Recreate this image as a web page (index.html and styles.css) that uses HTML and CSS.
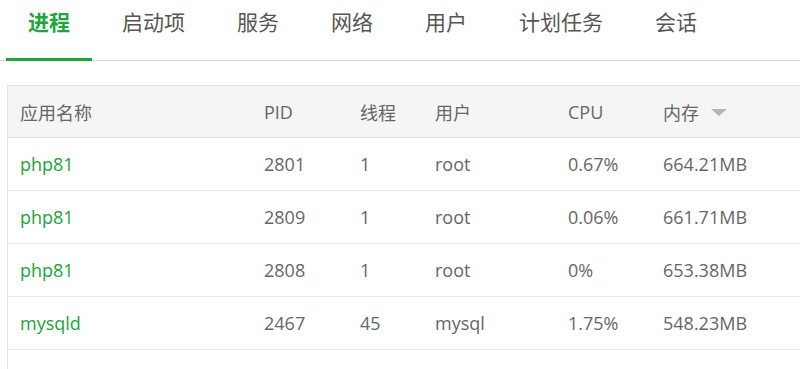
FILE: index.html
```html
<!DOCTYPE html>
<html lang="zh-CN">
<head>
  <meta charset="UTF-8">
  <title>任务管理器</title>
  <link rel="stylesheet" href="styles.css">
</head>
<body>
  <div class="tab-nav">
    <span class="tab active">进程</span>
    <span class="tab">启动项</span>
    <span class="tab">服务</span>
    <span class="tab">网络</span>
    <span class="tab">用户</span>
    <span class="tab">计划任务</span>
    <span class="tab">会话</span>
  </div>

  <table class="proc-table">
    <thead>
      <tr>
        <th class="col-name">应用名称</th>
        <th class="col-pid">PID</th>
        <th class="col-threads">线程</th>
        <th class="col-user">用户</th>
        <th class="col-cpu">CPU</th>
        <th class="col-mem">内存 <span class="sort-down"></span></th>
      </tr>
    </thead>
    <tbody>
      <tr>
        <td class="app">php81</td><td>2801</td><td>1</td><td>root</td><td>0.67%</td><td>664.21MB</td>
      </tr>
      <tr>
        <td class="app">php81</td><td>2809</td><td>1</td><td>root</td><td>0.06%</td><td>661.71MB</td>
      </tr>
      <tr>
        <td class="app">php81</td><td>2808</td><td>1</td><td>root</td><td>0%</td><td>653.38MB</td>
      </tr>
      <tr>
        <td class="app">mysqld</td><td>2467</td><td>45</td><td>mysql</td><td>1.75%</td><td>548.23MB</td>
      </tr>
      <tr>
        <td class="app">memcached</td><td>2586</td><td>16</td><td>root</td><td>0.49%</td><td>384.73MB</td>
      </tr>
    </tbody>
  </table>
</body>
</html>
```

FILE: styles.css
```css
body {
  margin: 0;
  background-color: #fff;
  font-family: "Open Sans", "Noto Sans CJK SC", sans-serif;
  color: #666;
  overflow: hidden;
}

.tab-nav {
  display: flex;
  gap: 8px;
  padding-left: 6px;
  border-bottom: 1px solid #d6d6d6;
}

.tab {
  padding: 0 22px 14px;
  line-height: 44px;
  font-size: 21px;
  color: #555;
  border-bottom: 3px solid transparent;
  margin-bottom: -1px;
}

.tab.active {
  color: #20a53a;
  font-weight: bold;
  border-bottom-color: #20a53a;
}

.proc-table {
  margin: 24px 0 0 7px;
  width: 830px;
  border-collapse: collapse;
  border: 1px solid #e2e2e2;
  font-size: 18px;
  table-layout: fixed;
}

.proc-table th {
  background-color: #f5f5f5;
  font-weight: normal;
  text-align: left;
  height: 51px;
  padding: 0 12px;
  color: #666;
  border-bottom: 1px solid #e2e2e2;
}

.proc-table td {
  height: 52px;
  padding: 0 12px;
  border-bottom: 1px solid #e6e6e6;
}

.col-name { width: 220px; }
.col-pid { width: 72px; }
.col-threads { width: 51px; }
.col-user { width: 109px; }
.col-cpu { width: 71px; }

.proc-table td.app {
  color: #20a53a;
}

.sort-down {
  display: inline-block;
  margin-left: 7px;
  width: 0;
  height: 0;
  border-left: 8px solid transparent;
  border-right: 8px solid transparent;
  border-top: 7px solid #b5b5b5;
  vertical-align: middle;
  position: relative;
  top: -2px;
}
```
